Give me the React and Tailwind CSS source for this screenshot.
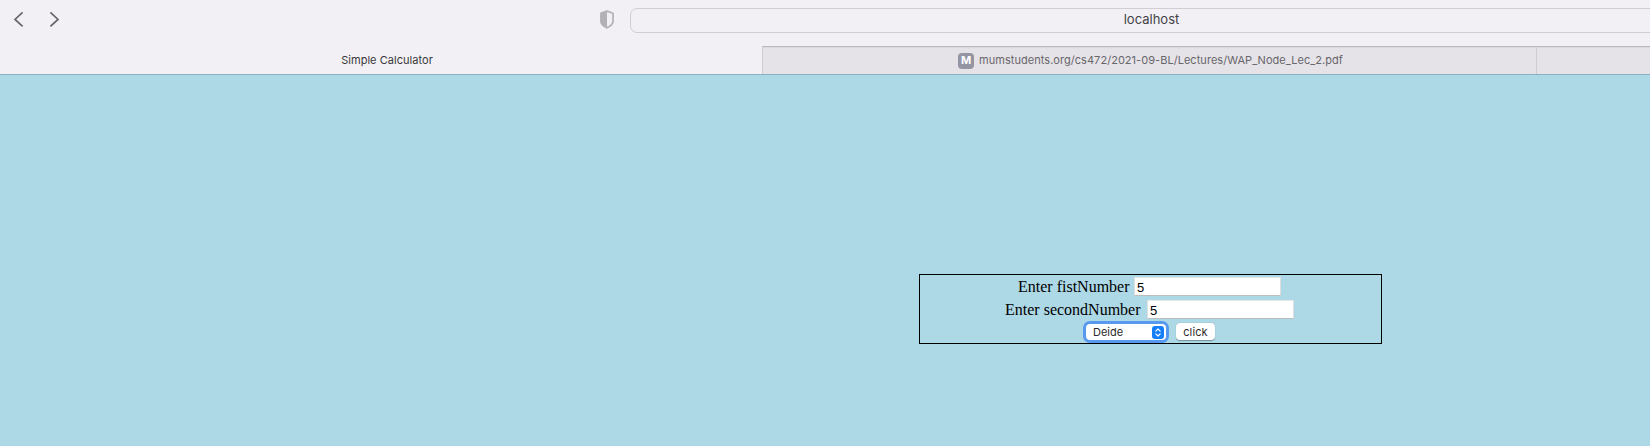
function Toolbar() {
  return (
    <div className="flex h-[46px] items-start">
      <svg className="mt-[11px] ml-[13px] h-[17px] w-[48px] shrink-0" viewBox="0 0 48 17" fill="none" stroke="#68666b" strokeWidth="1.7">
        <path d="M9.6 1.4 2 8.4l7.6 7" />
        <path d="M37.4 1.4 45 8.4l-7.6 7" />
      </svg>
      <svg className="mt-[10px] ml-[539px] h-[19px] w-[14px] shrink-0" viewBox="0 0 14 19">
        <path d="M7 1.1 13 3.2v8.2c0 2.4-2.6 4.6-6 6.4-3.4-1.8-6-4-6-6.4V3.2Z" fill="none" stroke="#b3b1b6" strokeWidth="1.7" strokeLinejoin="round" />
        <path d="M7 .6.4 3v8.5c0 2.8 2.8 5.1 6.6 7Z" fill="#b3b1b6" />
      </svg>
      <div className="mt-2 ml-4 flex h-[25px] w-[1043px] shrink-0 items-center justify-center rounded-[7px] border border-[#d0ced3] pb-[2px] text-[13px] text-[#434246]">
        <span>localhost</span>
      </div>
    </div>
  );
}

function Tabs() {
  return (
    <div className="flex h-7 text-[11px]">
      <div className="flex w-[762px] shrink-0 items-center justify-center pl-3 tracking-[0.04px] text-[#39383c]">Simple Calculator</div>
      <div className="flex w-[775px] shrink-0 items-center justify-center gap-[5px] border-x border-t border-x-[#cfcdd2] border-t-[#bab8bd] bg-[#e5e3e8] pl-[2px] text-[#68666b] shadow-[inset_0_1px_1px_#d9d7dc]">
        <span className="flex size-4 items-center justify-center rounded-[4px] bg-[#9495a3] text-[11px] font-bold text-white">M</span>
        <span className="tracking-[0.04px]">mumstudents.org/cs472/2021-09-BL/Lectures/WAP_Node_Lec_2.pdf</span>
      </div>
      <div className="flex-1 border-t border-[#bab8bd] bg-[#e5e3e8] shadow-[inset_0_1px_1px_#d9d7dc]" />
    </div>
  );
}

function NumberField({ label, labelClass }) {
  return (
    <label className="flex items-start gap-[5px] pr-[2px]">
      <span className={`h-[19px] text-[16px] leading-[19px] whitespace-nowrap ${labelClass}`}>{label}</span>
      <input
        defaultValue="5"
        className="h-[19px] w-[147px] border border-t-[#e8e8e8] border-r-[#dedede] border-b-[#bdbdbd] border-l-[#dedede] bg-white px-[2px] pt-px font-['Liberation_Sans',sans-serif] text-[13px] leading-[16px] outline-none"
      />
    </label>
  );
}

export default function App() {
  return (
    <div className="flex h-[446px] w-[1650px] flex-col overflow-hidden bg-[#f2f0f5] font-['Inter',sans-serif]">
      <Toolbar />
      <Tabs />
      <main className="flex-1 border-t border-[#85b2c4] bg-[#add8e6] pt-[199px] pl-[919px]">
        <form className="flex h-[70px] w-[463px] flex-col items-center border border-black pt-[2px] font-['Liberation_Serif',serif] text-black">
          <NumberField label="Enter fistNumber" labelClass="w-[111px]" />
          <div className="h-1" />
          <NumberField label="Enter secondNumber" labelClass="w-[137px]" />
          <div className="mt-1 flex items-start gap-[10px] font-['Inter',sans-serif] text-[11px] text-[#2b2b2b]">
            <div className="mt-px flex h-4 w-20 items-center justify-between rounded-[4px] bg-white pr-[2px] pl-[7px] shadow-[0_0_0_3px_#5699ee]">
              <span className="pt-px">Deide</span>
              <svg className="h-[13px] w-3" viewBox="0 0 12 13">
                <rect width="12" height="13" rx="3" fill="#147efb" />
                <path d="M3.8 5.2 6 3l2.2 2.2M3.8 7.8 6 10l2.2-2.2" fill="none" stroke="white" strokeWidth="1.2" strokeLinecap="round" strokeLinejoin="round" />
              </svg>
            </div>
            <button type="button" className="flex h-[17px] w-[39px] items-center justify-center rounded-[4px] bg-white pt-[2px] tracking-[0.13px] shadow-[0_0.5px_1px_#00000055]">click</button>
          </div>
        </form>
      </main>
    </div>
  );
}
